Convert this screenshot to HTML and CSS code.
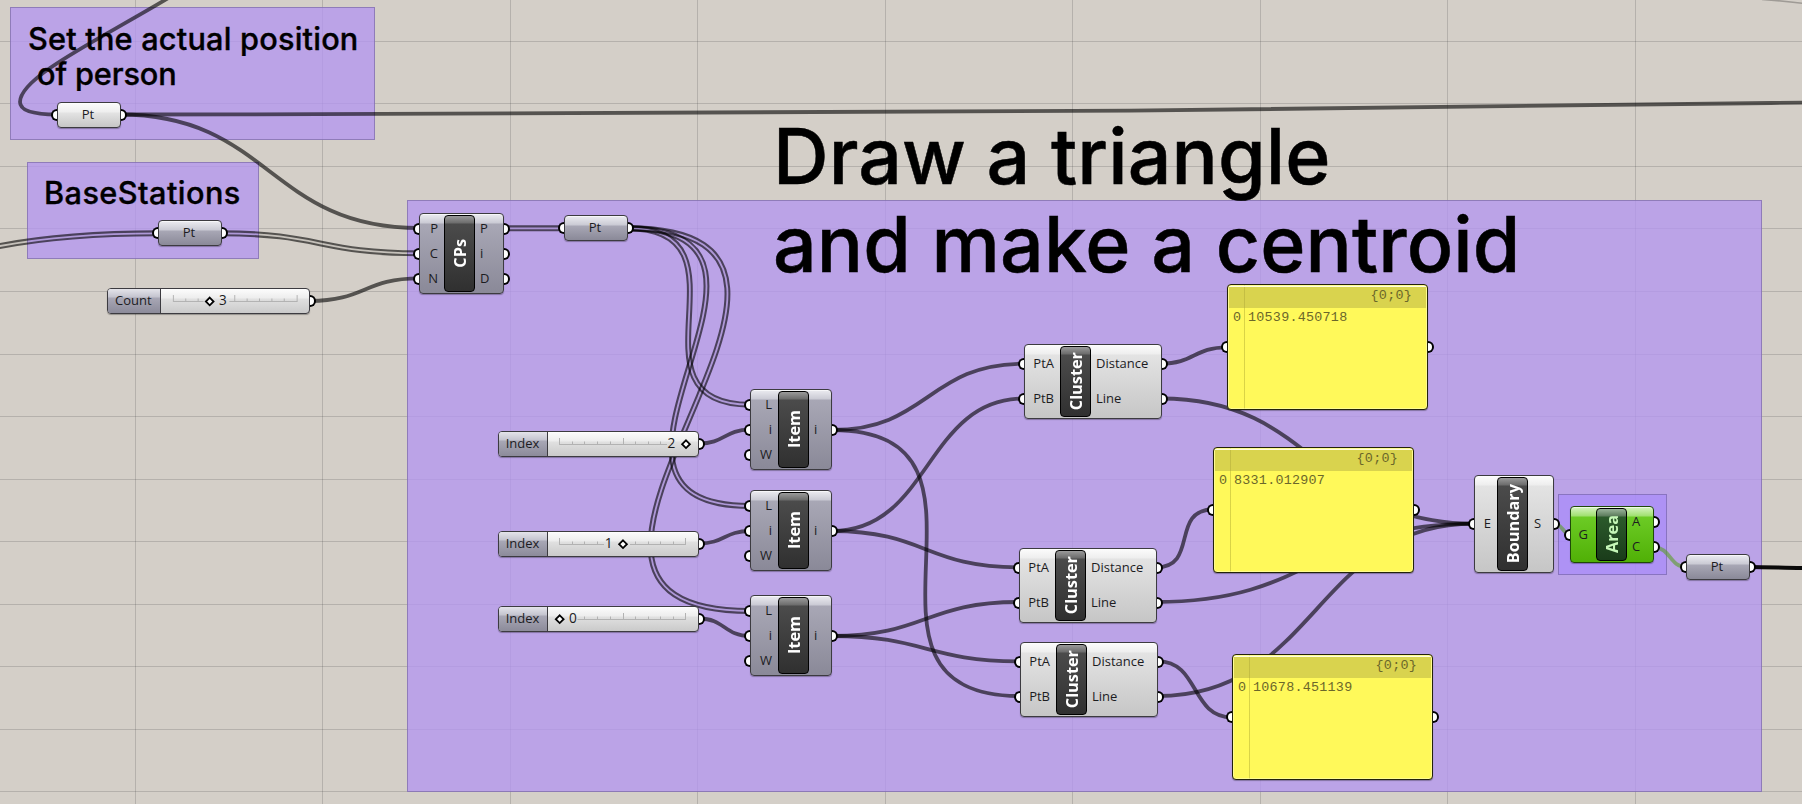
FILE: index.html
```html
<!DOCTYPE html>
<html lang="en">
<head>
<meta charset="utf-8">
<title>Definition canvas</title>
<link rel="stylesheet" href="styles.css">
</head>
<body>
<main class="canvas">
  <svg class="grid" id="grid" width="1802" height="804"></svg>

  <section class="group g-person"></section>
  <section class="group g-base"></section>
  <section class="group g-main"></section>
  <section class="group g-area"></section>

  <h2 class="note n-person"><span class="l1">Set the actual position</span><span class="l2">of person</span></h2>
  <h2 class="note n-base"><span>BaseStations</span></h2>
  <h1 class="title"><span class="t1">Draw a triangle</span><span class="t2">and make a centroid</span></h1>

  <svg class="wires" id="wires" width="1802" height="804"></svg>

  <div class="node pill light pt1"><i class="in"></i>Pt<i class="out"></i></div>
  <div class="node pill pt2"><i class="in"></i>Pt<i class="out"></i></div>
  <div class="node pill pt3"><i class="in"></i>Pt<i class="out"></i></div>
  <div class="node pill pt4"><i class="in"></i>Pt<i class="out"></i></div>

  <div class="node slider s-count"><span class="name">Count</span>
    <svg class="track" viewBox="0 0 150 24" width="150" height="24"><path class="rail" d="M12.5 6v7M25 9.500v3.500M37.500 9.500v3.500M74.500 6v7M87 9.500v3.500M99.500 9.500v3.500M112 9.500v3.500M124.500 9.500v3.500M137.500 6v7M12.500 12.500H43M69 12.500h68.500"/><path class="knob" d="M49.200 8.600l3.900 3.900-3.900 3.900-3.900-3.900z"/><text x="58.500" y="16.500">3</text></svg><i class="out"></i></div>
  <div class="node slider s-i2"><span class="name">Index</span>
    <svg class="track" viewBox="0 0 150 24" width="150" height="24"><path class="rail" d="M11.500 6v7M24.500 9.500v3.500M36.500 9.500v3.500M49.500 9.500v3.500M62.500 9.500v3.500M75.500 6v7M87.500 9.500v3.500M100.500 9.500v3.500M112.500 9.500v3.500M11.500 12.500H119"/><path class="knob" d="M138 8.300l3.900 3.900-3.900 3.900-3.900-3.900z"/><text x="119.500" y="16">2</text></svg><i class="out"></i></div>
  <div class="node slider s-i1"><span class="name">Index</span>
    <svg class="track" viewBox="0 0 150 24" width="150" height="24"><path class="rail" d="M11.500 6v7M24.500 9.500v3.500M36.500 9.500v3.500M49.500 9.500v3.500M87.500 9.500v3.500M100.500 9.500v3.500M112.500 9.500v3.500M125.500 9.500v3.500M137.500 6v7M11.500 12.500H56M82 12.500h55.500"/><path class="knob" d="M75 8.300l3.900 3.900-3.900 3.900-3.900-3.900z"/><text x="56.700" y="16">1</text></svg><i class="out"></i></div>
  <div class="node slider s-i0"><span class="name">Index</span>
    <svg class="track" viewBox="0 0 150 24" width="150" height="24"><path class="rail" d="M36.500 9.500v3.500M49.500 9.500v3.500M62.500 9.500v3.500M75.500 6v7M87.500 9.500v3.500M100.500 9.500v3.500M112.500 9.500v3.500M125.500 9.500v3.500M137.500 6v7M29.500 12.500h108"/><path class="knob" d="M11.700 8.300l3.900 3.900-3.900 3.900-3.900-3.900z"/><text x="21" y="16">0</text></svg><i class="out"></i></div>

  <div class="node comp cps">
    <div class="col left"><span>P<i class="in"></i></span><span>C<i class="in"></i></span><span>N<i class="in"></i></span></div>
    <div class="core"><b>CPs</b></div>
    <div class="col right"><span>P<i class="out"></i></span><span>i<i class="out"></i></span><span>D<i class="out"></i></span></div>
  </div>

  <div class="node comp item it1">
    <div class="col left"><span>L<i class="in"></i></span><span>i<i class="in"></i></span><span>W<i class="in"></i></span></div>
    <div class="core"><b>Item</b></div>
    <div class="col right"><span>i<i class="out"></i></span></div>
  </div>
  <div class="node comp item it2">
    <div class="col left"><span>L<i class="in"></i></span><span>i<i class="in"></i></span><span>W<i class="in"></i></span></div>
    <div class="core"><b>Item</b></div>
    <div class="col right"><span>i<i class="out"></i></span></div>
  </div>
  <div class="node comp item it3">
    <div class="col left"><span>L<i class="in"></i></span><span>i<i class="in"></i></span><span>W<i class="in"></i></span></div>
    <div class="core"><b>Item</b></div>
    <div class="col right"><span>i<i class="out"></i></span></div>
  </div>

  <div class="node comp light cluster cl1">
    <div class="col left"><span>PtA<i class="in"></i></span><span>PtB<i class="in"></i></span></div>
    <div class="core"><b>Cluster</b></div>
    <div class="col right"><span>Distance<i class="out"></i></span><span>Line<i class="out"></i></span></div>
  </div>
  <div class="node comp light cluster cl2">
    <div class="col left"><span>PtA<i class="in"></i></span><span>PtB<i class="in"></i></span></div>
    <div class="core"><b>Cluster</b></div>
    <div class="col right"><span>Distance<i class="out"></i></span><span>Line<i class="out"></i></span></div>
  </div>
  <div class="node comp light cluster cl3">
    <div class="col left"><span>PtA<i class="in"></i></span><span>PtB<i class="in"></i></span></div>
    <div class="core"><b>Cluster</b></div>
    <div class="col right"><span>Distance<i class="out"></i></span><span>Line<i class="out"></i></span></div>
  </div>

  <div class="node panel p1"><i class="in"></i><header>{0;0}</header><div class="row"><span>0</span><span>10539.450718</span></div><i class="out"></i></div>
  <div class="node panel p2"><i class="in"></i><header>{0;0}</header><div class="row"><span>0</span><span>8331.012907</span></div><i class="out"></i></div>
  <div class="node panel p3"><i class="in"></i><header>{0;0}</header><div class="row"><span>0</span><span>10678.451139</span></div><i class="out"></i></div>

  <div class="node comp light boundary">
    <div class="col left"><span>E<i class="in"></i></span></div>
    <div class="core"><b>Boundary</b></div>
    <div class="col right"><span>S<i class="out"></i></span></div>
  </div>
  <div class="node comp area">
    <div class="col left"><span>G<i class="in"></i></span></div>
    <div class="core"><b>Area</b></div>
    <div class="col right"><span>A<i class="out"></i></span><span>C<i class="out"></i></span></div>
  </div>
</main>
<script src="wires.js"></script>
</body>
</html>
```

FILE: styles.css
```css
* { box-sizing: border-box; }

body {
  margin: 0;
  background: #d4cfc8;
  font-family: "Open Sans", "Noto Sans", sans-serif;
}

.canvas {
  position: relative;
  width: 1802px;
  height: 804px;
  overflow: hidden;
}

.grid, .wires { position: absolute; left: 0; top: 0; display: block; }
.grid path { fill: none; stroke: rgba(60, 60, 60, .2); stroke-width: 1; }

/* groups */
.group {
  position: absolute;
  background: rgba(180, 150, 240, .78);
  border: 1px solid rgba(100, 85, 140, .5);
}
.g-person { left: 10px; top: 7px; width: 365px; height: 133px; }
.g-base { left: 27px; top: 162px; width: 232px; height: 97px; }
.g-main { left: 407px; top: 200px; width: 1355px; height: 592px; }
.g-area { left: 1558px; top: 494px; width: 109px; height: 81px; background: rgba(165, 135, 255, .6); }

/* scribbles */
.note, .title {
  position: absolute;
  margin: 0;
  color: #000;
  font-family: Inter, "Liberation Sans", sans-serif;
  font-weight: 500;
  white-space: nowrap;
}
.note span, .title span { display: block; }
.note { font-size: 30.7px; line-height: 35.3px; -webkit-text-stroke: .35px #000; }
.n-person { left: 28px; top: 21px; }
.n-person .l1 { letter-spacing: .2px; }
.n-person .l2 { padding-left: 9px; letter-spacing: -.13px; }
.n-base { left: 44px; top: 175px; letter-spacing: .42px; }
.title { left: 773px; top: 112px; font-size: 77px; line-height: 88px; letter-spacing: .1px; -webkit-text-stroke: .5px #000; }

/* wires */
.wire { fill: none; stroke: #000; stroke-opacity: .6; stroke-width: 3.8; }
.wire.list { stroke-width: 5.9; }
.wire.green { stroke: #5c9c2c; stroke-opacity: .62; stroke-width: 3.8; }
.wire.thin { stroke-opacity: .25; stroke-width: 1.6; }
.wire.solid { stroke-opacity: .95; stroke-width: 4; }

/* nodes */
.node {
  position: absolute;
  border: 1px solid #3c3b40;
  border-radius: 4px;
  color: #1c1c1f;
  font-size: 13px;
  line-height: 18px;
  background: linear-gradient(#ececf1 0, #cacad4 9px, #a8a7b5 10px, #8a8998 100%);
  box-shadow: inset 0 1px 0 rgba(255, 255, 255, .6), 0 1px 1px rgba(0, 0, 0, .3);
}
.node.light { background: linear-gradient(#fcfcfc 0, #eee 9px, #e3e3e3 10px, #c6c6c6 100%); }

.node .in, .node .out {
  position: absolute;
  top: 50%;
  width: 6px;
  height: 12px;
  margin-top: -6px;
  background: #fff;
  border: 2.4px solid #000;
}
.node .in { left: -7px; border-right: 0; border-radius: 6px 0 0 6px; }
.node .out { right: -7px; border-left: 0; border-radius: 0 6px 6px 0; }
.comp .in { left: -7px; }

.pill { display: flex; align-items: center; justify-content: center; width: 64px; height: 26px; padding: 0 2px 2px 0; }
.pt1 { left: 57px; top: 102px; }
.pt2 { left: 158px; top: 220px; }
.pt3 { left: 564px; top: 215px; }
.pt4 { left: 1686px; top: 554px; }

/* sliders */
.slider {
  display: flex;
  height: 26px;
  background: linear-gradient(#fcfcfc 0, #ededed 9px, #e0e0e0 10px, #cacaca 100%);
}
.slider .name {
  display: flex;
  align-items: center;
  justify-content: center;
  padding: 0 1px 2px 0;
  border-right: 1px solid #3c3b40;
  border-radius: 3px 0 0 3px;
  background: linear-gradient(#e4e4ea 0, #c4c4cf 8px, #a8a7b5 9px, #8c8b9a 100%);
}
.s-count { left: 107px; top: 288px; width: 203px; }
.s-count .name { width: 53px; }
.s-i2, .s-i1, .s-i0 { left: 498px; width: 201px; }
.s-i2 .name, .s-i1 .name, .s-i0 .name { width: 49px; }
.s-i2 { top: 431px; }
.s-i1 { top: 531px; }
.s-i0 { top: 606px; }
.rail { fill: none; stroke: #b2b2b2; stroke-width: 1; }
.knob { fill: #fff; stroke: #000; stroke-width: 1.8; }
.track text { fill: #1c1c1f; font-size: 13.7px; }

/* components */
.comp { display: flex; }
.comp .col {
  display: flex;
  flex-direction: column;
  justify-content: center;
}
.comp .col span { position: relative; display: flex; align-items: center; height: 25px; padding-bottom: 2px; }
.cluster .col span { height: 35px; }
.comp .left { flex: none; }
.comp .left span { justify-content: flex-end; padding-right: 6px; }
.comp .right { flex: 1; }
.comp .right span { padding-left: 5px; }
.core {
  flex: none;
  display: flex;
  align-items: center;
  justify-content: center;
  width: 31px;
  margin: 1px 0;
  border: 1.5px solid #000;
  border-radius: 4px;
  background: linear-gradient(#9a9a9a 0, #6c6c6c 7px, #4b4b4b 8px, #303030 100%);
  color: #fff;
}
.core b { writing-mode: vertical-rl; transform: rotate(180deg); font-size: 16.3px; line-height: 22px; }

.cps { left: 419px; top: 213px; width: 85px; height: 81px; }
.cps .left { width: 24px; }
.item { left: 750px; width: 82px; height: 81px; }
.item .left { width: 27px; }
.it1 { top: 389px; }
.it2 { top: 490px; }
.it3 { top: 595px; }
.cluster { width: 138px; height: 75px; }
.cluster .left { width: 35px; }
.cl1 { left: 1024px; top: 344px; }
.cl2 { left: 1019px; top: 548px; }
.cl3 { left: 1020px; top: 642px; }
.boundary { left: 1474px; top: 475px; width: 80px; height: 98px; }
.boundary .left { width: 22px; }
.boundary .right span { padding-left: 6px; }
.area {
  left: 1570px;
  top: 506px;
  width: 84px;
  height: 57px;
  border-color: #1f4a08;
  background: linear-gradient(#d9f5c4 0, #a0e070 9px, #6ccb25 10px, #50b006 100%);
}
.area .left { width: 25px; }
.area .left span { padding-right: 8px; }
.area .core { background: linear-gradient(#9ab49a 0, #5c7c5c 7px, #2b5a2b 8px, #1a3c1a 100%); color: #c5f7b8; }

/* panels */
.panel {
  width: 201px;
  height: 126px;
  border-color: #23220a;
  background: linear-gradient(90deg, transparent 16px, rgba(120, 115, 20, .28) 16px, rgba(120, 115, 20, .28) 17px, transparent 17px), #fff95a;
  font-family: "Liberation Mono", monospace;
  font-size: 13.4px;
  letter-spacing: .25px;
  color: #6b672a;
  box-shadow: inset 0 0 0 1px rgba(255, 255, 200, .5), 0 1px 1px rgba(0, 0, 0, .3);
}
.panel header {
  height: 22px;
  margin: 1px 1px 0;
  border-top: 1px solid #fffde0;
  background: rgba(170, 165, 65, .45);
  padding-right: 14px;
  text-align: right;
  line-height: 17px;
}
.panel .row { display: flex; line-height: 19px; }
.panel .row span:first-child { width: 20px; padding-left: 5px; }
.p1 { left: 1227px; top: 284px; }
.p2 { left: 1213px; top: 447px; }
.p3 { left: 1232px; top: 654px; }
```

FILE: wires.js
```js
const NS = 'http://www.w3.org/2000/svg';
const el = (name, attrs, parent) => {
  const n = document.createElementNS(NS, name);
  for (const k in attrs) n.setAttribute(k, attrs[k]);
  parent.appendChild(n);
  return n;
};

// background grid
const grid = document.getElementById('grid');
let g = '';
for (let i = 0; i < 9; i++) g += `M${Math.floor(135.3 + i * 187.5) + 0.5} 0V804`;
for (let i = 0; i < 13; i++) g += `M0 ${Math.floor(41.3 + i * 62.55) + 0.5}H1802`;
el('path', { d: g }, grid);

// a wire leaves and arrives horizontally; steeper wires bulge further out
const curve = (x1, y1, x2, y2) => {
  const d = Math.max((x2 - x1) / 2, Math.abs(y2 - y1) * 0.745);
  return `M${x1} ${y1}C${x1 + d} ${y1} ${x2 - d} ${y2} ${x2} ${y2}`;
};

const svg = document.getElementById('wires');
const defs = el('defs', {}, svg);
let count = 0;
const wire = (d, kind = '') => {
  const p = el('path', { d, class: 'wire ' + kind }, svg);
  if (kind === 'list') {
    const id = 'gap' + count++;
    const m = el('mask', { id, maskUnits: 'userSpaceOnUse', x: 0, y: 0, width: 1802, height: 804 }, defs);
    el('rect', { width: 1802, height: 804, fill: '#fff' }, m);
    el('path', { d, fill: 'none', stroke: '#1c1c1c', 'stroke-width': 1.8 }, m);
    p.setAttribute('mask', `url(#${id})`);
  }
};

wire('M170 -3C120 27 80 47 50 68C30 82 20 94 20 102C20 111 34 114.5 57 114.5');
wire('M120 114.500C500 114.500 900 113 1130 110.700C1400 108 1600 105.500 1804 102.500');
wire(curve(120, 114.5, 419, 228));
wire('M-5 247C40 238 90 233.300 158 233.300', 'list');
wire(curve(221, 233.3, 419, 253.3), 'list');
wire(curve(310, 301, 419, 278.3));
wire('M504 228.300H564.010V228.310', 'list');
wire(curve(628, 228.3, 750, 404.7), 'list');
wire(curve(628, 228.3, 750, 506), 'list');
wire(curve(628, 228.3, 750, 611), 'list');
wire(curve(699, 443.5, 750, 429.7));
wire(curve(699, 543.5, 750, 531));
wire(curve(699, 618.5, 750, 636));
wire(curve(832, 430, 1024, 363.7));
wire(curve(832, 430, 1020, 696));
wire(curve(832, 531, 1024, 398.5));
wire(curve(832, 531, 1019, 567.3));
wire(curve(832, 636, 1019, 602));
wire(curve(832, 636, 1020, 661.3));
wire(curve(1161, 363.7, 1227, 347.3));
wire(curve(1161, 398.5, 1474, 523.7));
wire(curve(1156, 567.3, 1213, 509.5));
wire(curve(1156, 602, 1474, 523.7));
wire(curve(1158, 661.3, 1232, 717.3));
wire(curve(1158, 696, 1474, 523.7));
wire(curve(1554, 523.7, 1571, 534.3), 'green');
wire(curve(1654, 547.3, 1686, 567), 'green');
wire('M1749 567C1770 567 1785 568 1804 568', 'solid');
wire('M1762 -0.500Q1785 1 1804 3.500', 'thin');
```
